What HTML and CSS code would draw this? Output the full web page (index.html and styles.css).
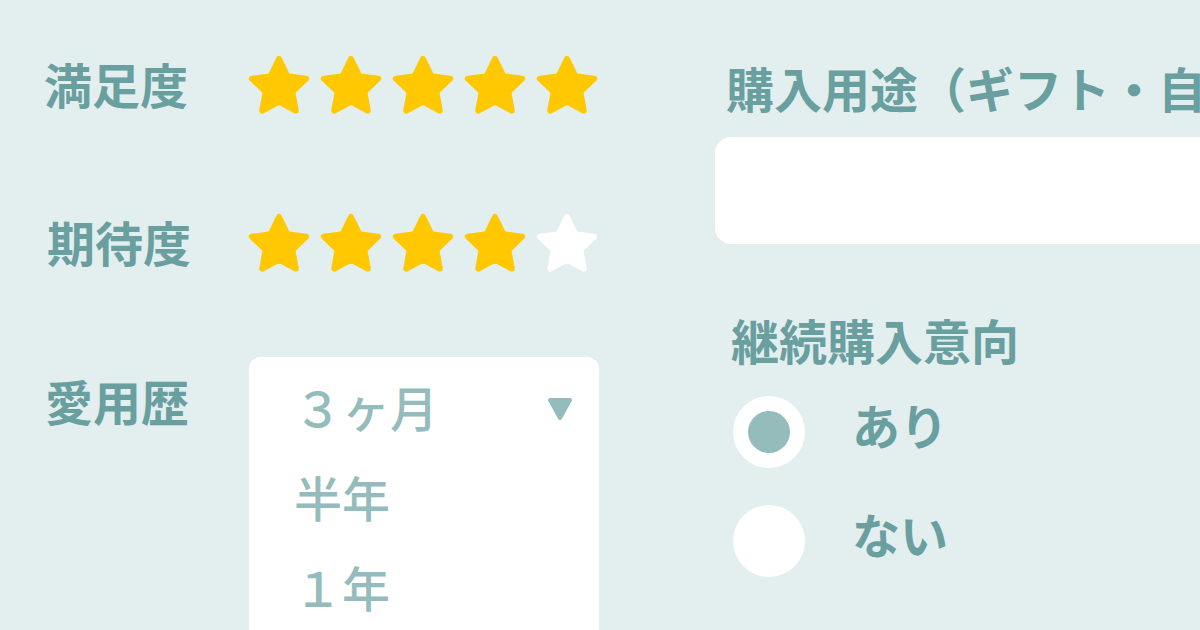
FILE: index.html
```html
<!DOCTYPE html>
<html lang="ja">
<head>
<meta charset="utf-8">
<title>アンケート</title>
<link rel="stylesheet" href="styles.css">
</head>
<body>
<svg width="0" height="0" class="defs" aria-hidden="true">
  <defs>
    <polygon id="star" points="30,3 38.23,20.17 57.11,22.69 43.32,35.83 46.75,54.56 30,45.5 13.25,54.56 16.68,35.83 2.89,22.69 21.77,20.17"/>
  </defs>
</svg>
<main class="page">
  <section class="left">
    <div class="row row-stars row-1">
      <div class="label">満足度</div>
      <div class="stars">
        <svg class="star on" viewBox="0 0 60 60"><use href="#star"/></svg>
        <svg class="star on" viewBox="0 0 60 60"><use href="#star"/></svg>
        <svg class="star on" viewBox="0 0 60 60"><use href="#star"/></svg>
        <svg class="star on" viewBox="0 0 60 60"><use href="#star"/></svg>
        <svg class="star on" viewBox="0 0 60 60"><use href="#star"/></svg>
      </div>
    </div>
    <div class="row row-stars row-2">
      <div class="label">期待度</div>
      <div class="stars">
        <svg class="star on" viewBox="0 0 60 60"><use href="#star"/></svg>
        <svg class="star on" viewBox="0 0 60 60"><use href="#star"/></svg>
        <svg class="star on" viewBox="0 0 60 60"><use href="#star"/></svg>
        <svg class="star on" viewBox="0 0 60 60"><use href="#star"/></svg>
        <svg class="star off" viewBox="0 0 60 60"><use href="#star"/></svg>
      </div>
    </div>
    <div class="row row-select">
      <div class="label label-top">愛用歴</div>
      <div class="select">
        <div class="option selected">
          <span class="opt-text">３ヶ月</span>
          <svg class="caret" viewBox="0 0 26 24"><polygon points="3,3 23,3 13,21"/></svg>
        </div>
        <div class="option"><span class="opt-text">半年</span></div>
        <div class="option"><span class="opt-text">１年</span></div>
      </div>
    </div>
  </section>
  <section class="right">
    <div class="title title-purpose">購入用途（ギフト・自分用）</div>
    <div class="input"></div>
    <div class="title title-repeat">継続購入意向</div>
    <div class="radios">
      <div class="radio-row">
        <span class="radio checked"><span class="dot"></span></span>
        <span class="radio-label">あり</span>
      </div>
      <div class="radio-row">
        <span class="radio"></span>
        <span class="radio-label">ない</span>
      </div>
    </div>
  </section>
</main>
</body>
</html>
```
FILE: styles.css
```css
* { box-sizing: border-box; }
html, body {
  margin: 0;
  padding: 0;
  width: 1200px;
  height: 630px;
  overflow: hidden;
  background: #e3eeef;
}
body {
  font-family: "Noto Sans CJK JP", "Noto Sans", sans-serif;
  color: #6a9fa0;
}
.defs { position: absolute; }
.page {
  display: flex;
  width: 1200px;
  height: 630px;
  overflow: hidden;
}
.left {
  width: 715px;
  flex: none;
  padding: 57px 0 0 44px;
  display: flex;
  flex-direction: column;
}
.row {
  display: flex;
}
.row-stars {
  align-items: center;
  height: 58px;
}
.row-1 { margin-bottom: 100px; }
.row-2 { margin-bottom: 84px; }
.label {
  width: 205px;
  flex: none;
  font-size: 48px;
  font-weight: 700;
  line-height: 48px;
  padding-bottom: 6px;
}
.row-2 .label { padding-left: 3px; }
.label-top {
  margin-top: 19px;
  padding-left: 1px;
  padding-bottom: 0;
}
.stars {
  display: flex;
  gap: 12px;
}
.star {
  width: 60px;
  height: 60px;
  overflow: visible;
  stroke-width: 6;
  stroke-linejoin: round;
}
.star.on { fill: #ffc800; stroke: #ffc800; }
.star.off { fill: #ffffff; stroke: #ffffff; }
.select {
  width: 350px;
  height: 300px;
  background: #ffffff;
  border-radius: 12px;
  padding: 7px 26px 0 45px;
  color: #95bcbc;
}
.option {
  height: 90px;
  display: flex;
  align-items: center;
  justify-content: space-between;
  font-size: 48px;
  font-weight: 500;
  line-height: 48px;
}
.opt-text { padding-bottom: 6px; }
.caret {
  width: 26px;
  height: 24px;
  fill: #95bcbc;
  stroke: #95bcbc;
  stroke-width: 4;
  stroke-linejoin: round;
}
.right {
  flex: none;
  width: 600px;
  padding-top: 63px;
  display: flex;
  flex-direction: column;
}
.title {
  font-size: 48px;
  font-weight: 700;
  line-height: 48px;
  white-space: nowrap;
}
.title-purpose { padding-left: 11px; }
.input {
  margin-top: 26px;
  height: 107px;
  width: 600px;
  background: #ffffff;
  border-radius: 16px;
}
.title-repeat {
  margin-top: 71px;
  padding-left: 16px;
}
.radios {
  margin-top: 33px;
  padding-left: 18px;
  display: flex;
  flex-direction: column;
  gap: 37px;
}
.radio-row {
  display: flex;
  align-items: center;
  gap: 47px;
}
.radio {
  width: 72px;
  height: 72px;
  border-radius: 50%;
  background: #ffffff;
  display: flex;
  align-items: center;
  justify-content: center;
  flex: none;
}
.dot {
  width: 42px;
  height: 42px;
  border-radius: 50%;
  background: #94bcbb;
}
.radio-label {
  font-size: 48px;
  font-weight: 700;
  line-height: 48px;
  padding-bottom: 16px;
}
```
